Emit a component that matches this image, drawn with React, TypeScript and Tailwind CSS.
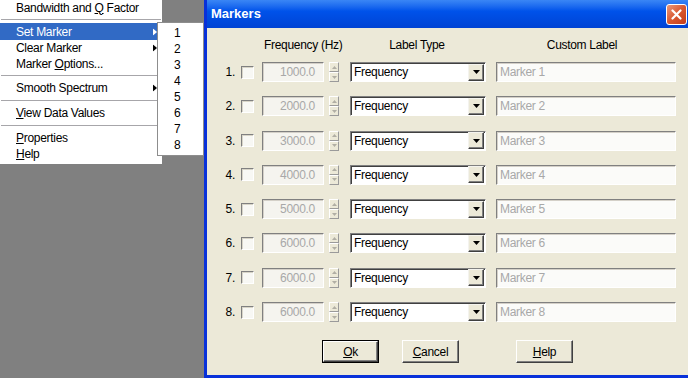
import React from "react";

const rows = [
  { n: 1, f: "1000.0" },
  { n: 2, f: "2000.0" },
  { n: 3, f: "3000.0" },
  { n: 4, f: "4000.0" },
  { n: 5, f: "5000.0" },
  { n: 6, f: "6000.0" },
  { n: 7, f: "6000.0" },
  { n: 8, f: "6000.0" },
];

function Arrow({ white }: { white?: boolean }) {
  return (
    <svg width="4" height="7" viewBox="0 0 4 7" className="absolute right-[5px] top-1/2 -translate-y-1/2">
      <path d="M0 0 L4 3.5 L0 7 Z" fill={white ? "#fff" : "#000"} />
    </svg>
  );
}

function MenuItem({ children, sub, h = "h-[16px]" }: { children: React.ReactNode; sub?: boolean; h?: string }) {
  return (
    <div className={`relative ${h} flex items-center pl-[16px] text-black`}>
      <span>{children}</span>
      {sub && <Arrow />}
    </div>
  );
}

function Sep() {
  return <div className="mx-[1px] mt-[4px] mb-[4px] h-px bg-[#a7a6aa]" />;
}

function Menu() {
  return (
    <div className="relative w-[204px] shrink-0">
      <div className="w-[162px] bg-white pb-[2px] text-[12px] tracking-[-0.3px]">
        <MenuItem h="h-[15px]">
          Bandwidth and <u>Q</u> Factor
        </MenuItem>
        <div className="mx-[1px] mt-[4px] mb-[3px] h-px bg-[#a7a6aa]" />
        <div className="relative flex h-[17px] items-center bg-[#316ac5] pl-[16px] text-white">
          <span>Set Marker</span>
          <Arrow white />
        </div>
        <MenuItem sub>Clear Marker</MenuItem>
        <MenuItem h="h-[15px]">
          Marker <u>O</u>ptions...
        </MenuItem>
        <Sep />
        <MenuItem sub>Smooth Spectrum</MenuItem>
        <Sep />
        <MenuItem>
          <u>V</u>iew Data Values
        </MenuItem>
        <Sep />
        <MenuItem>
          <u>P</u>roperties
        </MenuItem>
        <MenuItem>
          <u>H</u>elp
        </MenuItem>
      </div>
      <div className="absolute left-[157px] top-[22px] w-[47px] border border-[#8d8d8d] bg-white pt-[2px] pb-[2px] text-[12px]">
        {rows.map((r) => (
          <div key={r.n} className="h-[16px] pl-[16px] leading-[16px]">
            {r.n}
          </div>
        ))}
      </div>
    </div>
  );
}

function Spin() {
  return (
    <div className="ml-[5px] flex h-[20px] w-[10px] flex-col">
      {[0, 1].map((i) => (
        <div
          key={i}
          className="flex h-[10px] w-[10px] items-center justify-center border border-t-white border-l-white border-b-[#9a9a9a] border-r-[#9a9a9a] bg-[#ece9d8]"
        >
          <svg width="5" height="3" viewBox="0 0 5 3">
            <path d={i === 0 ? "M0 3 L2.5 0 L5 3 Z" : "M0 0 L2.5 3 L5 0 Z"} fill="#b0aea4" />
          </svg>
        </div>
      ))}
    </div>
  );
}

function Row({ n, f }: { n: number; f: string }) {
  return (
    <div className="flex h-[20px] items-center">
      <div className="w-[28px] text-right text-[12px] text-black">{n}.</div>
      <div className="ml-[6px] h-[13px] w-[13px] border border-t-[#808080] border-l-[#808080] border-b-white border-r-white bg-[#f8f8f4] shadow-[inset_1px_1px_0_#d8d5c8]" />
      <div className="ml-[8px] flex h-[20px] w-[62px] items-center justify-end border border-t-[#808080] border-l-[#808080] border-b-white border-r-white bg-[#f5f4ef] pr-[8px] text-[12px] text-[#a8a8a8] shadow-[inset_1px_1px_0_#d4d0c8]">
        {f}
      </div>
      <Spin />
      <div className="ml-[11px] flex h-[20px] w-[136px] items-center border border-t-[#808080] border-l-[#808080] border-b-white border-r-white bg-white shadow-[inset_1px_1px_0_#404040]">
        <span className="flex-1 pl-[3px] text-[12px] text-black">Frequency</span>
        <div className="mr-[1px] flex h-[17px] w-[16px] items-center justify-center border border-t-[#f4f3ee] border-l-[#f4f3ee] border-b-[#404040] border-r-[#404040] bg-[#ece9d8] shadow-[inset_-1px_-1px_0_#808080]">
          <svg width="7" height="4" viewBox="0 0 7 4">
            <path d="M0 0 L7 0 L3.5 4 Z" fill="#000" />
          </svg>
        </div>
      </div>
      <div className="ml-[10px] flex h-[20px] w-[180px] items-center border border-t-[#808080] border-l-[#808080] border-b-white border-r-white bg-[#fbfbf9] pl-[3px] text-[12px] text-[#a8a8a8] shadow-[inset_1px_1px_0_#d4d0c8]">
        Marker {n}
      </div>
    </div>
  );
}

function Btn({ children, def, ml }: { children: React.ReactNode; def?: boolean; ml: string }) {
  return (
    <div
      className={`${ml} flex h-[23px] w-[57px] items-center justify-center text-[12px] text-black ${
        def ? "border border-black" : ""
      }`}
    >
      <div className="flex h-full w-full items-center justify-center border border-t-white border-l-white border-b-[#404040] border-r-[#404040] bg-[#ece9d8] shadow-[inset_-1px_-1px_0_#808080]">
        {children}
      </div>
    </div>
  );
}

function Dialog() {
  return (
    <div className="flex h-[378px] flex-1 flex-col border-l-[3px] border-b-[3px] border-[#0831d9] bg-[#ece9d8] font-['Liberation_Sans',sans-serif] tracking-[-0.3px]">
      <div className="relative flex h-[28px] items-center bg-linear-to-b from-[#3a86f5] via-[#0052ea] via-40% to-[#0043d4] pl-[4px] text-[13px] font-bold tracking-normal text-white">
        Markers
        <div className="absolute right-[1px] top-[4px] flex h-[21px] w-[21px] items-center justify-center rounded-[3px] border border-white bg-linear-to-br from-[#e8987a] via-[#d9582f] to-[#c33d1c]">
          <svg width="11" height="11" viewBox="0 0 11 11">
            <path d="M1.5 1.5 L9.5 9.5 M9.5 1.5 L1.5 9.5" stroke="#fff" strokeWidth="2.2" strokeLinecap="round" />
          </svg>
        </div>
      </div>
      <div className="flex h-[34px] items-center whitespace-nowrap text-[12px] text-black">
        <div className="w-[57px] shrink-0" />
        <div className="w-[77px] shrink-0 text-center">Frequency (Hz)</div>
        <div className="ml-[11px] w-[136px] shrink-0 pr-[6px] text-center">Label Type</div>
        <div className="ml-[10px] w-[180px] shrink-0 pr-[12px] text-center">Custom Label</div>
      </div>
      <div className="flex flex-col gap-y-[14.3px]">
        {rows.map((r) => (
          <Row key={r.n} n={r.n} f={r.f} />
        ))}
      </div>
      <div className="mt-[18px] flex">
        <Btn def ml="ml-[115px]">
          <span>
            <u>O</u>k
          </span>
        </Btn>
        <Btn ml="ml-[23px]">
          <span>
            <u>C</u>ancel
          </span>
        </Btn>
        <Btn ml="ml-[57px]">
          <span>
            <u>H</u>elp
          </span>
        </Btn>
      </div>
    </div>
  );
}

export default function App() {
  return (
    <div className="flex h-[378px] w-[688px] overflow-hidden bg-[#808080] font-['Liberation_Sans',sans-serif]">
      <Menu />
      <Dialog />
    </div>
  );
}
